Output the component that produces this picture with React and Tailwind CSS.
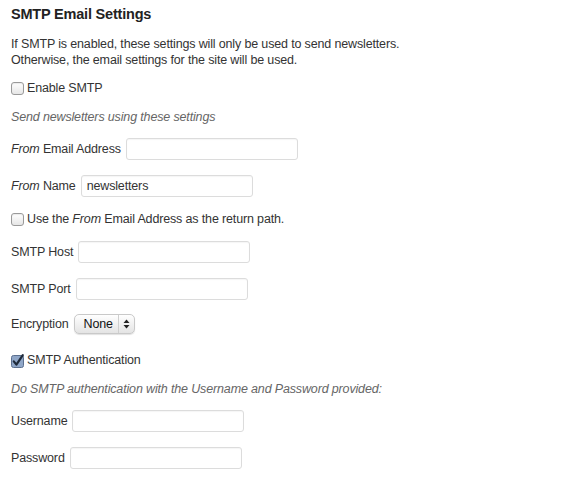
const Checkbox = ({ checked }) => {
  if (checked) {
    return (
      <svg width="15" height="15" viewBox="0 0 15 15" className="shrink-0">
        <rect x="0.5" y="2.5" width="12" height="12" rx="2" fill="#8fa6c7" stroke="#5b6f8e" />
        <path d="M2.8 8.4 L5.4 11.6 L11.8 2.2" fill="none" stroke="#1f2a3a" strokeWidth="2.2" strokeLinecap="round" strokeLinejoin="round" />
      </svg>
    );
  }
  return (
    <span className="inline-block w-[13px] h-[13px] shrink-0 rounded-[3px] border border-[#9a9a9a] bg-gradient-to-b from-white to-[#e6e6e6] shadow-[inset_0_1px_1px_rgba(0,0,0,0.08)]" />
  );
};

const Field = ({ label, value, className }) => (
  <div className={`flex items-center h-[22px] ${className}`}>
    <span className="mr-[5px]">{label}</span>
    <div className="w-[172px] h-[22px] border border-[#dcdcdc] rounded-[3px] bg-white flex items-center px-[5px] shadow-[inset_0_1px_1px_rgba(0,0,0,0.04)]">
      {value}
    </div>
  </div>
);

const App = () => {
  return (
    <div className="w-[571px] h-[484px] bg-white pl-[11px] text-[12.5px] tracking-[-0.15px] leading-[16px] text-[#333]" style={{ fontFamily: '"Liberation Sans", Arial, sans-serif' }}>
      <h2 className="pt-[4px] h-[24px] text-[14.5px] tracking-[-0.2px] leading-[20px] font-bold text-[#222]">SMTP Email Settings</h2>

      <p className="mt-[12px]">
        If SMTP is enabled, these settings will only be used to send newsletters.
        <br />
        Otherwise, the email settings for the site will be used.
      </p>

      <label className="mt-[12px] h-[16px] flex items-center gap-[3px]">
        <Checkbox />
        <span>Enable SMTP</span>
      </label>

      <p className="mt-[13px] h-[16px] italic text-[#666]">Send newsletters using these settings</p>

      <Field className="mt-[13px]" label={<><i>From</i> Email Address</>} />
      <Field className="mt-[15px]" label={<><i>From</i> Name</>} value="newsletters" />

      <label className="mt-[14px] h-[16px] flex items-center gap-[3px]">
        <Checkbox />
        <span>Use the <i>From</i> Email Address as the return path.</span>
      </label>

      <Field className="mt-[14px]" label="SMTP Host" />
      <Field className="mt-[15px]" label="SMTP Port" />

      <div className="mt-[14px] h-[20px] flex items-center">
        <span className="mr-[5px]">Encryption</span>
        <div className="w-[61px] h-[20px] flex items-stretch rounded-[5px] border border-[#c9c9c9] bg-gradient-to-b from-white to-[#e4e4e4] shadow-[0_1px_1px_rgba(0,0,0,0.12)]">
          <span className="flex-1 flex items-center pl-[9px] text-[#111]">None</span>
          <span className="w-[16px] border-l border-[#cfcfcf] flex items-center justify-center">
            <svg width="7" height="10" viewBox="0 0 7 10">
              <path d="M3.5 0.5 L6.5 4 L0.5 4 Z" fill="#222" />
              <path d="M3.5 9.5 L6.5 6 L0.5 6 Z" fill="#222" />
            </svg>
          </span>
        </div>
      </div>

      <label className="mt-[18px] h-[16px] flex items-center gap-[1px]">
        <Checkbox checked />
        <span>SMTP Authentication</span>
      </label>

      <p className="mt-[13px] h-[16px] italic text-[#666]">Do SMTP authentication with the Username and Password provided:</p>

      <Field className="mt-[13px]" label="Username" />
      <Field className="mt-[15px]" label="Password" />
    </div>
  );
};

export default App;
